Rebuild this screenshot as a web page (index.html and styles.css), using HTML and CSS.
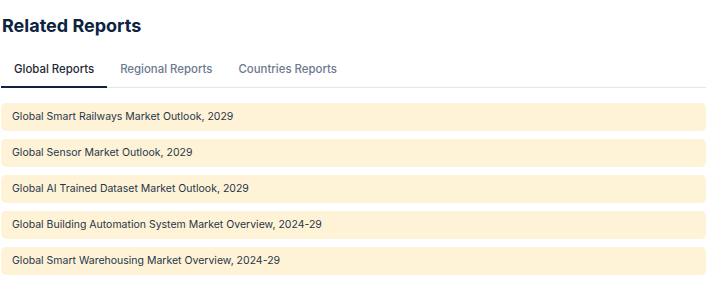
FILE: index.html
```html
<!DOCTYPE html>
<html lang="en">
<head>
<title>Related Reports</title>
<meta charset="utf-8">
<link rel="stylesheet" href="styles.css">
</head>
<body>
<div class="related">
<h2 class="related-title">Related Reports</h2>
<div class="tabs">
<a class="tab active" href="#">Global Reports</a>
<a class="tab" href="#">Regional Reports</a>
<a class="tab" href="#">Countries Reports</a>
</div>
<ul class="report-list">
<li><a href="#">Global Smart Railways Market Outlook, 2029</a></li>
<li><a href="#">Global Sensor Market Outlook, 2029</a></li>
<li><a href="#">Global AI Trained Dataset Market Outlook, 2029</a></li>
<li><a href="#">Global Building Automation System Market Overview, 2024-29</a></li>
<li><a href="#">Global Smart Warehousing Market Overview, 2024-29</a></li>
</ul>
</div>
</body>
</html>
```

FILE: styles.css
```css
body {
margin: 0;
font-family: Inter, "Noto Sans", sans-serif;
background: #fff;
}
.related {
width: 705px;
padding: 14px 0 0 1px;
}
.related-title {
margin: 0 0 0 1px;
font-size: 18px;
font-weight: 700;
line-height: 24px;
color: #0d2340;
}
.tabs {
display: flex;
margin-top: 24px;
border-bottom: 1px solid #e5e7eb;
}
.tab {
display: block;
padding: 0 13px 10px 13px;
font-size: 11.4px;
font-weight: 500;
line-height: 14px;
color: #6b7890;
text-decoration: none;
border-bottom: 2px solid transparent;
margin-bottom: -1px;
}
.tab.active {
color: #1f2937;
border-bottom-color: #0d2340;
}
.report-list {
list-style: none;
margin: 15px 0 0 0;
padding: 0;
display: flex;
flex-direction: column;
gap: 8px;
}
.report-list a {
display: block;
height: 28px;
line-height: 28px;
padding: 0 11px;
border-radius: 5px;
background: #fef3d7;
color: #283548;
font-size: 10.5px;
text-decoration: none;
}
```
